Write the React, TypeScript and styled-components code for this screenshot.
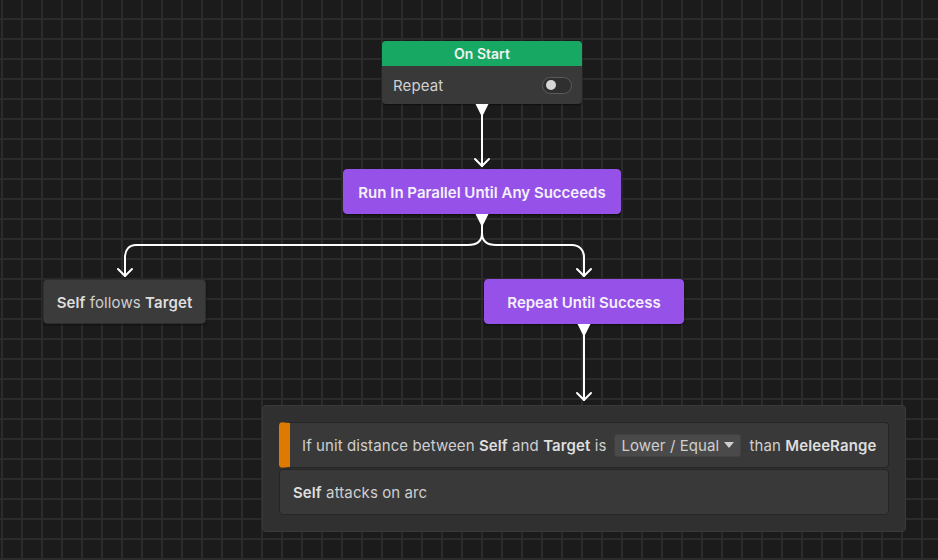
import styled, { createGlobalStyle } from 'styled-components';

const GlobalStyle = createGlobalStyle`
  html, body {
    margin: 0;
    padding: 0;
    background: #1b1b1b;
  }
  * {
    box-sizing: border-box;
  }
`;

export default function App() {
  return (
    <>
      <GlobalStyle />
      <Canvas>
        <Edges viewBox="0 0 938 560" xmlns="http://www.w3.org/2000/svg">
          <g fill="#fff">
            <path d="M475.5 104h13L482 117z" />
            <path d="M475.5 214h13L482 227z" />
            <path d="M577.5 324h13L584 337z" />
          </g>
          <g fill="none" stroke="#fff" strokeWidth="2" strokeLinecap="round" strokeLinejoin="round">
            <path d="M482 115v51" />
            <path d="M475 159l7 7 7-7" />

            <path d="M482 225v8c0 8-5 12-14 12H136c-7 0-11 5-11 12v19" />
            <path d="M482 225v8c0 8 5 12 14 12h76c7 0 12 5 12 12v19" />
            <path d="M118 269l7 7 7-7" />
            <path d="M577 269l7 7 7-7" />

            <path d="M584 335v65" />
            <path d="M577 393l7 7 7-7" />
          </g>
        </Edges>

        <Node $x={382} $y={41} $w={200}>
          <Header>On Start</Header>
          <Body>
            <Label>Repeat</Label>
            <Toggle>
              <Knob />
            </Toggle>
          </Body>
        </Node>

        <Action $x={343} $y={169} $w={278} $tone="purple">
          <Title>Run In Parallel Until Any Succeeds</Title>
        </Action>

        <Action $x={43} $y={279} $w={163} $tone="gray">
          <Text>
            <b>Self</b> follows <b>Target</b>
          </Text>
        </Action>

        <Action $x={484} $y={279} $w={200} $tone="purple">
          <Title>Repeat Until Success</Title>
        </Action>

        <Sequence $x={262} $y={405} $w={644}>
          <Row $condition>
            <Text>
              If unit distance between <b>Self</b> and <b>Target</b> is
            </Text>
            <Dropdown>
              Lower / Equal
              <Caret viewBox="0 0 10 6">
                <path d="M0 0h10L5 6z" fill="#cfcfcf" />
              </Caret>
            </Dropdown>
            <Text>
              than <b>MeleeRange</b>
            </Text>
          </Row>
          <Row>
            <Text>
              <b>Self</b> attacks on arc
            </Text>
          </Row>
        </Sequence>
      </Canvas>
    </>
  );
}

const Canvas = styled.div`
  position: relative;
  width: 938px;
  height: 560px;
  overflow: hidden;
  background-color: #1b1b1b;
  background-image:
    linear-gradient(90deg, transparent 1px, #2b2b2b 1px, #2b2b2b 3px, transparent 3px),
    linear-gradient(180deg, transparent 18px, #2b2b2b 18px, #2b2b2b 20px, transparent 20px);
  background-size: 20px 20px;
  font-family: Inter, 'Noto Sans', sans-serif;
  color: #d4d4d4;
`;

const Edges = styled.svg`
  position: absolute;
  inset: 0;
  width: 938px;
  height: 560px;
  z-index: 2;
  pointer-events: none;
`;

const Node = styled.div<{ $x: number; $y: number; $w: number }>`
  position: absolute;
  left: ${(p) => p.$x}px;
  top: ${(p) => p.$y}px;
  width: ${(p) => p.$w}px;
  border-radius: 4px;
  overflow: hidden;
  background: #393939;
  box-shadow: 0 1px 2px rgba(0, 0, 0, 0.5);
  z-index: 1;
`;

const Header = styled.div`
  height: 25px;
  background: #17a863;
  color: #f2f2f2;
  font-size: 14px;
  font-weight: 600;
  display: flex;
  align-items: center;
  justify-content: center;
`;

const Body = styled.div`
  height: 38px;
  display: flex;
  align-items: center;
  justify-content: space-between;
  padding: 0 10px 0 11px;
`;

const Label = styled.span`
  font-size: 15px;
  color: #cfcfcf;
  letter-spacing: 0.1px;
`;

const Toggle = styled.div`
  width: 30px;
  height: 17px;
  border-radius: 9px;
  border: 1px solid #5c5c5c;
  background: #2f2f2f;
  display: flex;
  align-items: center;
  padding-left: 3px;
`;

const Knob = styled.div`
  width: 10px;
  height: 10px;
  border-radius: 50%;
  background: #d6d6d6;
`;

const Action = styled.div<{ $x: number; $y: number; $w: number; $tone: 'purple' | 'gray' }>`
  position: absolute;
  left: ${(p) => p.$x}px;
  top: ${(p) => p.$y}px;
  width: ${(p) => p.$w}px;
  height: 45px;
  padding-top: 2px;
  border-radius: 4px;
  display: flex;
  align-items: center;
  justify-content: center;
  font-size: 15px;
  z-index: 1;
  background: ${(p) => (p.$tone === 'purple' ? '#9551e8' : '#3b3b3b')};
  border: 1px solid ${(p) => (p.$tone === 'purple' ? '#9551e8' : '#2e2e2e')};
  box-shadow: 0 1px 2px rgba(0, 0, 0, 0.5);
`;

const Title = styled.span`
  color: #f4f0fb;
  font-weight: 600;
  white-space: nowrap;
`;

const Text = styled.span`
  color: #cfcfcf;
  white-space: nowrap;
  letter-spacing: 0.1px;

  b {
    font-weight: 600;
    color: #dedede;
  }
`;

const Sequence = styled.div<{ $x: number; $y: number; $w: number }>`
  position: absolute;
  left: ${(p) => p.$x}px;
  top: ${(p) => p.$y}px;
  width: ${(p) => p.$w}px;
  padding: 16px;
  border-radius: 4px;
  background: #303030;
  border: 1px solid #393939;
  display: flex;
  flex-direction: column;
  gap: 1px;
  z-index: 1;
`;

const Row = styled.div<{ $condition?: boolean }>`
  height: 46px;
  border-radius: 4px;
  background: #393939;
  border: 1px solid #262626;
  display: flex;
  align-items: center;
  gap: 8px;
  font-size: 15px;
  padding-left: ${(p) => (p.$condition ? '12px' : '13px')};
  ${(p) => (p.$condition ? 'border-left: 11px solid #de7a00;' : '')}
`;

const Dropdown = styled.div`
  height: 23px;
  width: 127px;
  display: flex;
  align-items: center;
  justify-content: space-between;
  padding: 0 6px;
  border-radius: 3px;
  background: #4a4a4a;
  border: 1px solid #414141;
  color: #cfcfcf;
  font-size: 15px;
  letter-spacing: 0.1px;
`;

const Caret = styled.svg`
  width: 10px;
  height: 6px;
`;
